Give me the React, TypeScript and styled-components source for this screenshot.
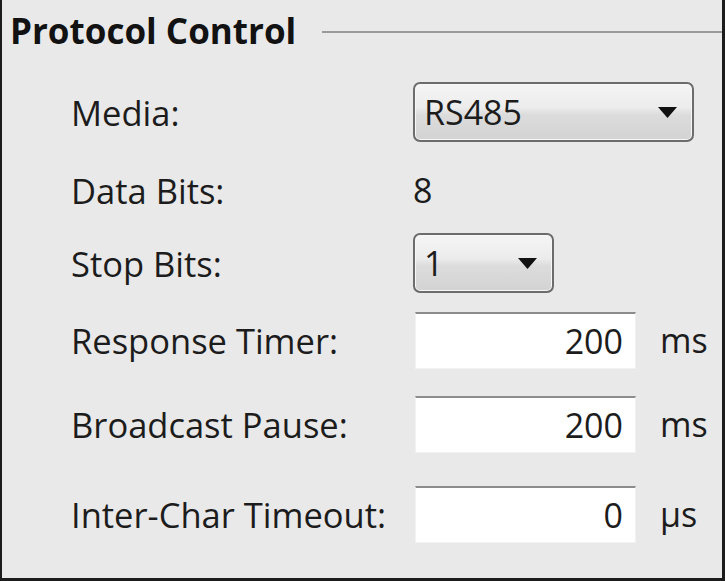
import styled, { createGlobalStyle } from "styled-components";

const GlobalStyle = createGlobalStyle`
  html, body {
    margin: 0;
    padding: 0;
    background: #e9e9e9;
  }
  body {
    font-family: "Open Sans", "Noto Sans", sans-serif;
  }
`;

const Frame = styled.div`
  box-sizing: border-box;
  width: 725px;
  height: 581px;
  background: #e9e9e9;
  border-left: 2px solid #1c1c1c;
  border-right: 3px solid #1c1c1c;
  border-bottom: 3px solid #1c1c1c;
  overflow: hidden;
`;

const Header = styled.div`
  display: flex;
  align-items: center;
  gap: 26px;
  height: 48px;
  padding-top: 7px;
  padding-left: 8px;
`;

const Title = styled.h1`
  margin: 0;
  font-size: 35px;
  font-weight: 700;
  line-height: 48px;
  color: #121212;
  white-space: nowrap;
`;

const Rule = styled.div`
  flex: 1;
  height: 2px;
  margin-top: 1px;
  background: #9a9a9a;
`;

const Form = styled.div`
  display: grid;
  grid-template-columns: 342px 247px 1fr;
  grid-template-rows: 80px 76px 70px 84px 84px 96px;
  align-items: center;
  margin-top: 17px;
  padding-left: 69px;
`;

const Label = styled.div`
  font-size: 34.5px;
  color: #1c1c1c;
  white-space: nowrap;
`;

const Value = styled.div`
  font-size: 34px;
  color: #1c1c1c;
`;

const Unit = styled.div`
  font-size: 34px;
  color: #1c1c1c;
`;

const Combo = styled.div<{ $width: number; $span?: boolean }>`
  box-sizing: border-box;
  display: flex;
  align-items: center;
  justify-content: space-between;
  width: ${(p) => p.$width}px;
  height: 60px;
  padding: 0 15px 0 9px;
  border: 2px solid #6c6c6c;
  border-radius: 7px;
  background: linear-gradient(#f5f5f5 0%, #ececec 42%, #dcdcdc 55%, #d3d3d3 100%);
  box-shadow: inset 0 0 0 1px #f7f7f7;
  font-size: 34px;
  color: #1c1c1c;
  grid-column: ${(p) => (p.$span ? "2 / 4" : "auto")};
`;

const Arrow = styled.svg`
  width: 19px;
  height: 11px;
  flex-shrink: 0;
`;

const TextBox = styled.input`
  box-sizing: border-box;
  width: 221px;
  height: 57px;
  margin-left: 2px;
  padding: 0 12px 0 0;
  background: #fff;
  border: 1px solid #f2f2f2;
  border-top: 2px solid #8c8c8c;
  font-family: "Open Sans", "Noto Sans", sans-serif;
  font-size: 34px;
  color: #1c1c1c;
  text-align: right;
  outline: none;
`;

const DropArrow = () => (
  <Arrow viewBox="0 0 19 11">
    <path d="M0 0 H19 L9.5 11 Z" fill="#111" />
  </Arrow>
);

const Spacer = styled.div``;

const App = () => {
  return (
    <>
      <GlobalStyle />
      <Frame>
        <Header>
          <Title>Protocol Control</Title>
          <Rule />
        </Header>
        <Form>
          <Label>Media:</Label>
          <Combo $width={281} $span>
            <span>RS485</span>
            <DropArrow />
          </Combo>

          <Label>Data Bits:</Label>
          <Value>8</Value>
          <Spacer />

          <Label>Stop Bits:</Label>
          <Combo $width={141}>
            <span>1</span>
            <DropArrow />
          </Combo>
          <Spacer />

          <Label>Response Timer:</Label>
          <TextBox readOnly defaultValue="200" />
          <Unit>ms</Unit>

          <Label>Broadcast Pause:</Label>
          <TextBox readOnly defaultValue="200" />
          <Unit>ms</Unit>

          <Label>Inter-Char Timeout:</Label>
          <TextBox readOnly defaultValue="0" />
          <Unit>µs</Unit>
        </Form>
      </Frame>
    </>
  );
};

export default App;
